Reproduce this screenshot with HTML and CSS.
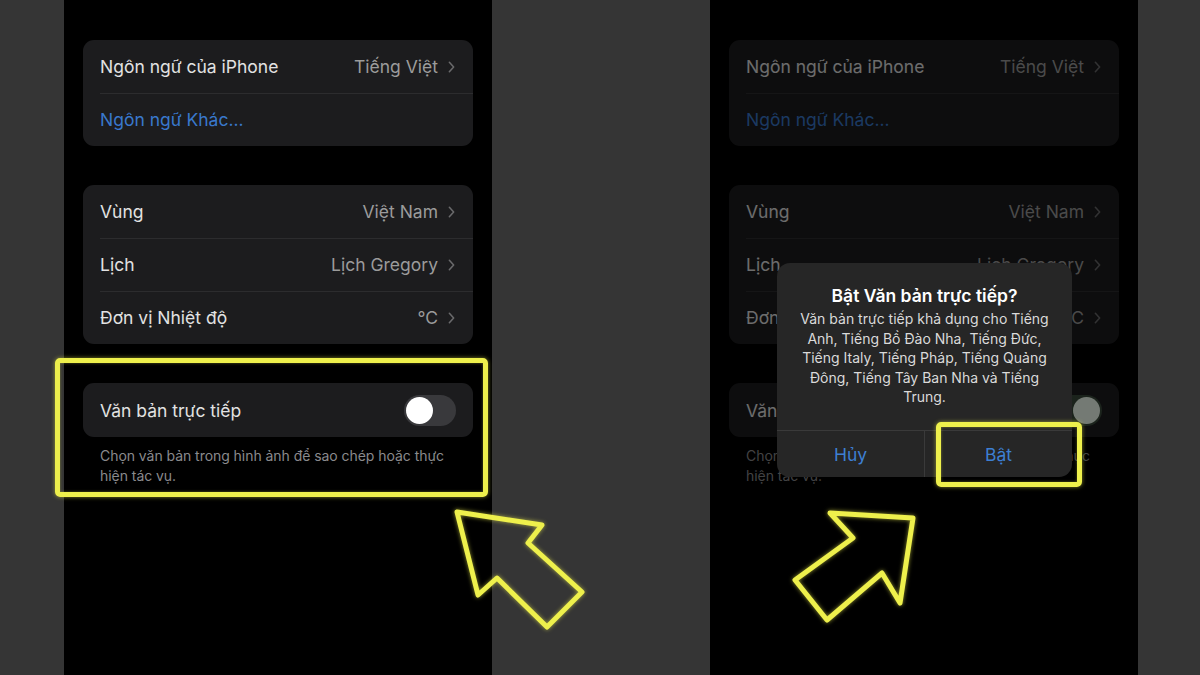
FILE: index.html
```html
<!DOCTYPE html>
<html lang="vi">
<head>
<meta charset="utf-8">
<link rel="stylesheet" href="styles.css">
</head>
<body>
<div class="stage">
  <div class="phone">
    <div class="card">
      <div class="row"><span class="label">Ngôn ngữ của iPhone</span><span class="value">Tiếng Việt<svg class="chev" viewBox="0 0 8 14"><path d="M1.5 1.5 L6.5 7 L1.5 12.5"/></svg></span></div>
      <div class="row"><span class="link">Ngôn ngữ Khác...</span></div>
    </div>
    <div class="card">
      <div class="row"><span class="label">Vùng</span><span class="value">Việt Nam<svg class="chev" viewBox="0 0 8 14"><path d="M1.5 1.5 L6.5 7 L1.5 12.5"/></svg></span></div>
      <div class="row"><span class="label">Lịch</span><span class="value">Lịch Gregory<svg class="chev" viewBox="0 0 8 14"><path d="M1.5 1.5 L6.5 7 L1.5 12.5"/></svg></span></div>
      <div class="row"><span class="label">Đơn vị Nhiệt độ</span><span class="value">°C<svg class="chev" viewBox="0 0 8 14"><path d="M1.5 1.5 L6.5 7 L1.5 12.5"/></svg></span></div>
    </div>
    <div class="card">
      <div class="row"><span class="label">Văn bản trực tiếp</span><span class="toggle"><span class="knob"></span></span></div>
    </div>
    <p class="footer">Chọn văn bản trong hình ảnh để sao chép hoặc thực<br>hiện tác vụ.</p>
    <div class="hl hl-left"></div>
  </div>

  <div class="phone">
    <div class="card">
      <div class="row"><span class="label">Ngôn ngữ của iPhone</span><span class="value">Tiếng Việt<svg class="chev" viewBox="0 0 8 14"><path d="M1.5 1.5 L6.5 7 L1.5 12.5"/></svg></span></div>
      <div class="row"><span class="link">Ngôn ngữ Khác...</span></div>
    </div>
    <div class="card">
      <div class="row"><span class="label">Vùng</span><span class="value">Việt Nam<svg class="chev" viewBox="0 0 8 14"><path d="M1.5 1.5 L6.5 7 L1.5 12.5"/></svg></span></div>
      <div class="row"><span class="label">Lịch</span><span class="value">Lịch Gregory<svg class="chev" viewBox="0 0 8 14"><path d="M1.5 1.5 L6.5 7 L1.5 12.5"/></svg></span></div>
      <div class="row"><span class="label">Đơn vị Nhiệt độ</span><span class="value">°C<svg class="chev" viewBox="0 0 8 14"><path d="M1.5 1.5 L6.5 7 L1.5 12.5"/></svg></span></div>
    </div>
    <div class="card">
      <div class="row"><span class="label">Văn bản trực tiếp</span><span class="toggle on"><span class="knob"></span></span></div>
    </div>
    <p class="footer">Chọn văn bản trong hình ảnh để sao chép hoặc thực<br>hiện tác vụ.</p>
    <div class="dim"></div>
    <div class="alert">
      <div class="alert-body">
        <div class="alert-title">Bật Văn bản trực tiếp?</div>
        <div class="alert-text">Văn bản trực tiếp khả dụng cho Tiếng<br>Anh, Tiếng Bồ Đào Nha, Tiếng Đức,<br>Tiếng Italy, Tiếng Pháp, Tiếng Quảng<br>Đông, Tiếng Tây Ban Nha và Tiếng<br>Trung.</div>
      </div>
      <div class="alert-actions">
        <div class="btn">Hủy</div>
        <div class="btn">Bật</div>
      </div>
    </div>
    <div class="hl hl-right"></div>
  </div>
</div>

<svg class="arrows" viewBox="0 0 1200 675" width="1200" height="675">
  <polygon points="457,512 542,525 528,543 582,592 547,627 497,578 478,595"/>
  <polygon points="913,518 830,513 853,538 795,580 827,620 882,573 900,603"/>
</svg>
</body>
</html>
```

FILE: styles.css
```css
* { box-sizing: border-box; }

html, body {
  margin: 0;
  padding: 0;
}

body {
  width: 1200px;
  height: 675px;
  overflow: hidden;
  background: #353535;
  font-family: Inter, "Noto Sans", "Liberation Sans", sans-serif;
}

.stage {
  display: flex;
  gap: 218px;
  padding-left: 64px;
  height: 675px;
}

.phone {
  position: relative;
  width: 428px;
  height: 675px;
  background: #000;
  padding: 40px 0 0 19px;
  display: flex;
  flex-direction: column;
  gap: 39px;
}

.card {
  width: 390px;
  background: #1c1c1e;
  border-radius: 11px;
  display: flex;
  flex-direction: column;
}

.row {
  height: 53px;
  display: flex;
  align-items: center;
  justify-content: space-between;
  padding: 0 18px 0 17px;
  position: relative;
}

.row + .row::before {
  content: "";
  position: absolute;
  left: 17px;
  right: 0;
  top: 0;
  height: 1px;
  background: #2c2c2e;
}

.label {
  color: #e2e2e2;
  font-size: 17.5px;
}

.link {
  color: #3978cc;
  font-size: 17.5px;
}

.value {
  display: flex;
  align-items: center;
  gap: 10px;
  color: #9b9b9b;
  font-size: 17.5px;
}

.chev {
  width: 7px;
  height: 12px;
}

.chev path {
  fill: none;
  stroke: #6a6a6c;
  stroke-width: 1.8;
  stroke-linecap: round;
  stroke-linejoin: round;
}

.card:nth-of-type(3) .row { height: 54px; }

.toggle {
  width: 52px;
  height: 31px;
  border-radius: 16px;
  background: #39393c;
  padding: 2px;
  display: flex;
  margin-right: -1px;
}

.toggle .knob {
  width: 27px;
  height: 27px;
  border-radius: 50%;
  background: #fff;
}

.toggle.on { justify-content: flex-end; background: #3a4a3c; }
.toggle.on .knob { background: #f2fff2; }

.footer {
  margin: -30px 0 0 17px;
  color: #8a8a8d;
  font-size: 14px;
  line-height: 20px;
  letter-spacing: -0.05px;
}

.hl {
  position: absolute;
  border: 5px solid #eef04c;
  border-radius: 5px;
  box-shadow: 0 0 4px rgba(238, 240, 76, 0.55), inset 0 0 3px rgba(238, 240, 76, 0.4);
}

.hl-left {
  left: -9px;
  top: 358px;
  width: 433px;
  height: 139px;
}

.hl-right {
  left: 226px;
  top: 422px;
  width: 146px;
  height: 65px;
}

.dim {
  position: absolute;
  inset: 0;
  background: rgba(0, 0, 0, 0.52);
}

.alert {
  position: absolute;
  left: 67px;
  top: 263px;
  width: 295px;
  height: 214px;
  background: #262626;
  border-radius: 13px;
  display: flex;
  flex-direction: column;
  overflow: hidden;
}

.alert-body {
  flex: 1;
  padding: 22px 12px 0;
  text-align: center;
  color: #fff;
}

.alert-title {
  font-size: 17.5px;
  font-weight: 600;
  line-height: 22px;
  margin-bottom: 2px;
}

.alert-text {
  font-size: 14px;
  line-height: 19.6px;
  color: #dadada;
}

.alert-actions {
  height: 47px;
  display: flex;
  border-top: 1px solid #3a3a3a;
}

.btn {
  flex: 1;
  display: flex;
  align-items: center;
  justify-content: center;
  color: #3d7fd2;
  font-size: 17.5px;
}

.btn + .btn { border-left: 1px solid #3a3a3a; }

.arrows {
  position: absolute;
  left: 0;
  top: 0;
  pointer-events: none;
}

.arrows polygon {
  fill: none;
  stroke: #eef04c;
  stroke-width: 5;
  stroke-linejoin: round;
  filter: drop-shadow(0 0 2px rgba(238, 240, 76, 0.6));
}
```
